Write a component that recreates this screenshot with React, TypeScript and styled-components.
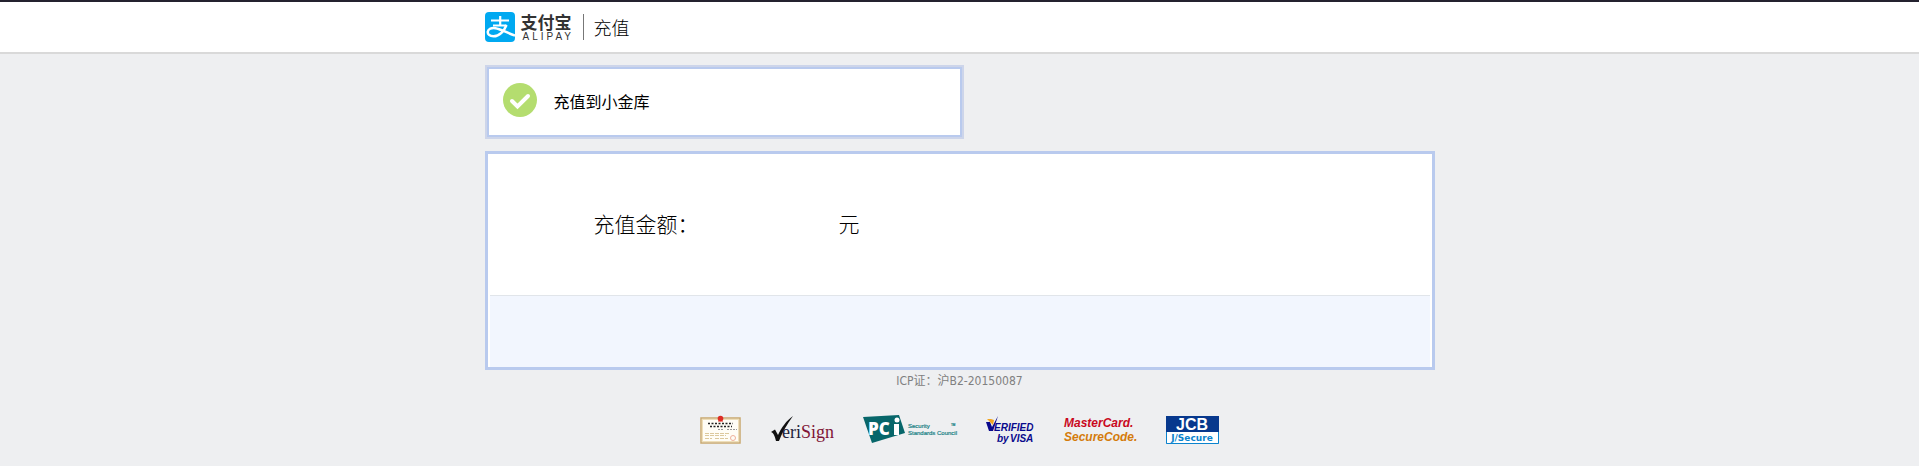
import React from "react";
import styled, { createGlobalStyle } from "styled-components";

const GlobalStyle = createGlobalStyle`
  * { box-sizing: border-box; }
  body {
    margin: 0;
    background: #fff;
    color: #000;
    font-family: "Liberation Sans", "Noto Sans CJK SC", sans-serif;
  }
`;

const Page = styled.div`
  background: #eeeff1;
`;

const Header = styled.header`
  border-top: 2px solid #24222f;
  border-bottom: 2px solid #d9d9d9;
  background: #fff;
`;

const Container = styled.div`
  width: 100%;
  max-width: 950px;
  margin: 0 auto;
`;

const Brand = styled(Container)`
  display: flex;
  align-items: center;
  height: 50px;
`;

const LogoLink = styled.a`
  display: flex;
  align-items: center;
  gap: 6px;
  color: #333;
  text-decoration: none;
`;

const Wordmark = styled.span`
  display: flex;
  flex-direction: column;
`;

const WordmarkMain = styled.span`
  font: 700 17px/20px "Noto Sans CJK SC", sans-serif;
`;

const WordmarkSub = styled.span`
  padding-left: 2px;
  font: 400 10px/10px "Liberation Sans", sans-serif;
  letter-spacing: 3px;
  margin-right: -3px;
`;

const PageTitle = styled.h1`
  display: flex;
  align-items: center;
  height: 26px;
  margin: 0 0 0 11px;
  padding-left: 10px;
  border-left: 1px solid #777;
  font: 300 18px/26px "Noto Sans CJK SC", sans-serif;
`;

const Main = styled.main`
  display: flex;
  flex-direction: column;
  gap: 12px;
  padding-top: 11px;
`;

const Notice = styled.section`
  display: flex;
  align-items: flex-start;
  gap: 17px;
  width: 479px;
  max-width: 100%;
  height: 74px;
  padding: 16px;
  border: 2px solid #cdd5ea;
  box-shadow: inset 0 0 0 2px #b9caee;
  background: #fff;
  font: 400 16px/36px "Noto Sans CJK SC", sans-serif;
`;

const Panel = styled.section`
  border: 3px solid #b9caee;
  background: #fff;
`;

const Amount = styled.div`
  display: flex;
  gap: 140px;
  padding: 54px 106px 57px;
  font: 300 21px/30px "Noto Sans CJK SC", sans-serif;
`;

const PanelFooter = styled.div`
  height: 72px;
  margin: 0 2px;
  border-top: 1px solid #e1e5ea;
  background: #f2f6fe;
`;

const Footer = styled.footer`
  padding-bottom: 21px;
`;

const License = styled.p`
  margin: 0;
  text-align: center;
  color: #808080;
  font: 12px/22px "DejaVu Sans Condensed", "Noto Sans CJK SC", sans-serif;
`;

const Badges = styled.div`
  display: flex;
  justify-content: center;
  gap: 30px;
  padding-top: 23px;
`;

const BadgeLink = styled.a`
  display: block;
  height: 30px;
  svg { display: block; overflow: visible; }
`;

function AlipayMark() {
  return (
    <svg width="30" height="30" viewBox="0 0 30 30" aria-hidden="true">
      <rect width="30" height="30" rx="4" fill="#00a9f1" />
      <g fill="none" stroke="#fff">
        <path d="M6 8.5H24M15.200 4V13.500M8 13.500H21.500" strokeWidth="2.200" />
        <path d="M21.500 13C19.500 18 15 24.300 8.500 24.300C4.500 24.300 2.500 22 2.800 19.700C3.200 17 6.500 15.500 10.500 16.200C15.500 17 21 20.500 30 23.500" strokeWidth="2.500" />
      </g>
    </svg>
  );
}

function Tick() {
  return (
    <svg width="34" height="34" viewBox="0 0 34 34" aria-hidden="true">
      <circle cx="17" cy="17" r="17" fill="#b4dd6f" />
      <path d="M9 18L14.500 23.500L25 13" fill="none" stroke="#fff" strokeWidth="4" strokeLinecap="round" strokeLinejoin="miter" />
    </svg>
  );
}

function Certificate() {
  return (
    <svg width="41" height="30" viewBox="0 0 41 30">
      <rect x="1" y="3" width="39" height="25" fill="#fffdf6" stroke="#c9a970" strokeWidth="1.500" />
      <rect x="2.500" y="4.500" width="36" height="22" fill="none" stroke="#efdfba" />
      <path d="M8 8.500H33M10 11.500H32" stroke="#222" strokeWidth="1.500" strokeDasharray="2 1.500" />
      <path d="M18 14.500H23M27 14.500H37" stroke="#999" strokeDasharray="2 1" />
      <path d="M5 18.500H30M5 20.500H26M5 23.500H12M15 23.500H28" stroke="#dcc99d" strokeDasharray="4 1" />
      <circle cx="20.500" cy="3.500" r="2.800" fill="#dc2d25" />
      <path d="M18 6H23" stroke="#dc2d25" />
      <circle cx="33" cy="23" r="2.500" fill="none" stroke="#efb19c" />
    </svg>
  );
}

function VeriSign() {
  return (
    <svg width="62" height="30" viewBox="0 0 62 30">
      <path d="M0 17L4 14.500L7 20C11 12 15 6 22 1C16 9 11 18 8 26H5C4 22 3 18 0 17Z" fill="#111" />
      <text x="11" y="23" fill="#23233c" fontFamily="Liberation Serif" fontSize="18">eri</text>
      <text x="30" y="23" fill="#801436" fontFamily="Liberation Serif" fontSize="18">Sign</text>
    </svg>
  );
}

function Pci() {
  return (
    <svg width="92" height="30" viewBox="0 0 92 30">
      <path d="M0 2L36 0L42 18L9 28Z" fill="#07666a" />
      <text x="5" y="20" fill="#fff" fontFamily="Open Sans" fontWeight="800" fontSize="17">PC</text>
      <path d="M31 9H36V20H31Z" fill="#fff" />
      <circle cx="34" cy="5" r="2.500" fill="#fff" />
      <g fill="#168084" stroke="#168084" strokeWidth="0.200" fontFamily="Liberation Sans" fontSize="6">
        <text x="45" y="13">Security</text>
        <text x="45" y="20">Standards Council</text>
        <text x="88" y="11" fontSize="3">TM</text>
      </g>
    </svg>
  );
}

function VerifiedByVisa() {
  return (
    <svg width="49" height="30" viewBox="0 0 49 30">
      <path d="M1 7H5L7 12L13 1L8 16H4Z" fill="#09098c" />
      <path d="M2 4H6L9 5L8 10L6 8Z" fill="#f2a521" />
      <g fill="#09098c" fontFamily="Liberation Sans" fontWeight="700" fontStyle="italic" fontSize="10">
        <text x="9" y="16">ERIFIED</text>
        <text x="12" y="27">by</text>
        <text x="25" y="27">VISA</text>
      </g>
    </svg>
  );
}

function SecureCode() {
  return (
    <svg width="72" height="30" viewBox="0 0 72 30">
      <g fontFamily="Liberation Sans" fontWeight="700" fontStyle="italic" fontSize="12">
        <text x="0" y="12" fill="#c9091d">MasterCard.</text>
        <text x="0" y="26" fill="#d47b0b">SecureCode.</text>
      </g>
    </svg>
  );
}

function Jcb() {
  return (
    <svg width="53" height="30" viewBox="0 0 53 30">
      <rect x="0.500" y="1.500" width="52" height="27" rx="1" fill="#fff" stroke="#07388d" />
      <path d="M0 1H53V17H0Z" fill="#07388d" />
      <path d="M0.500 17V28.500H52.500V17" fill="none" stroke="#0c84ce" />
      <text x="26" y="15" textAnchor="middle" fill="#fff" fontFamily="Liberation Sans" fontWeight="700" fontSize="16">JCB</text>
      <text x="26" y="26" textAnchor="middle" fill="#0c84ce" fontFamily="DejaVu Sans" fontWeight="700" fontSize="9">J/Secure</text>
    </svg>
  );
}

const badges = [
  { name: "工商营业执照", Art: Certificate },
  { name: "VeriSign", Art: VeriSign },
  { name: "PCI Security Standards Council", Art: Pci },
  { name: "Verified by Visa", Art: VerifiedByVisa },
  { name: "MasterCard SecureCode", Art: SecureCode },
  { name: "JCB J/Secure", Art: Jcb },
];

export default function App() {
  return (
    <Page>
      <GlobalStyle />
      <Header>
        <Brand>
          <LogoLink href="#">
            <AlipayMark />
            <Wordmark>
              <WordmarkMain>支付宝</WordmarkMain>
              <WordmarkSub>ALIPAY</WordmarkSub>
            </Wordmark>
          </LogoLink>
          <PageTitle>充值</PageTitle>
        </Brand>
      </Header>
      <Container>
        <Main>
          <Notice>
            <Tick />
            <span>充值到小金库</span>
          </Notice>
          <Panel>
            <Amount>
              <span>充值金额：</span>
              <span>元</span>
            </Amount>
            <PanelFooter />
          </Panel>
        </Main>
        <Footer>
          <License>ICP证：沪B2-20150087</License>
          <Badges>
            {badges.map(({ name, Art }) => (
              <BadgeLink key={name} href="#" aria-label={name}>
                <Art />
              </BadgeLink>
            ))}
          </Badges>
        </Footer>
      </Container>
    </Page>
  );
}
